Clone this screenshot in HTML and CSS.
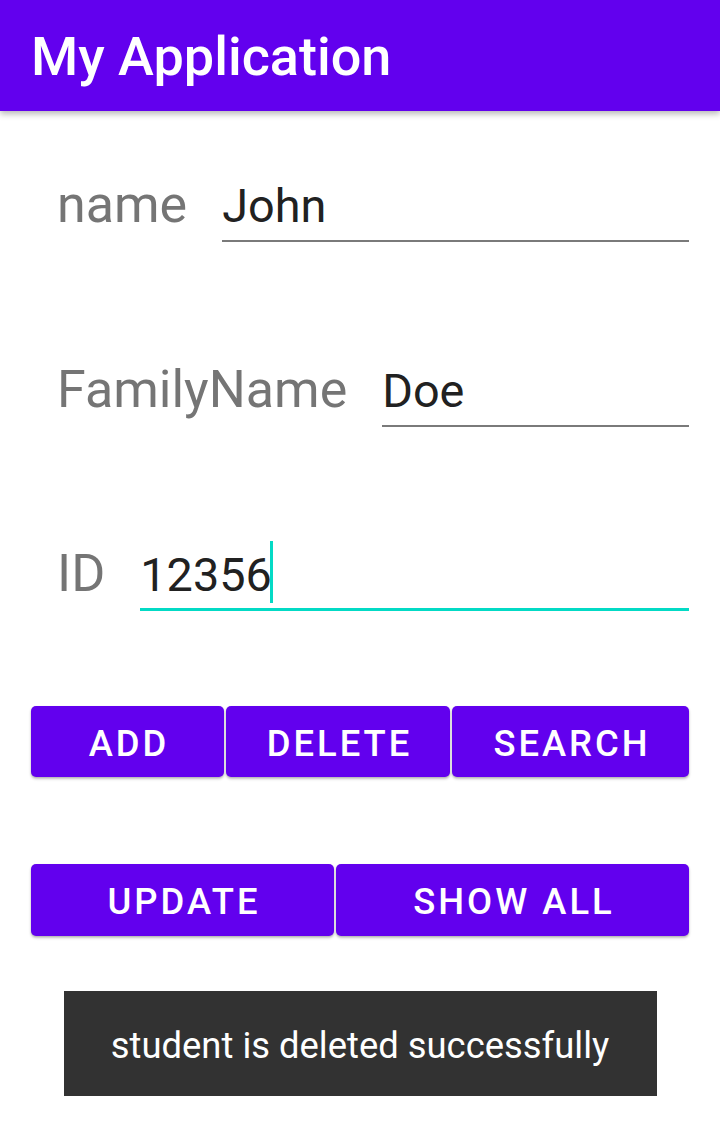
FILE: index.html
```html
<!DOCTYPE html>
<html lang="en">
<head>
<meta charset="utf-8">
<title>My Application</title>
<link rel="stylesheet" href="styles.css">
</head>
<body>
<header class="app-bar">
  <h1 class="app-title">My Application</h1>
</header>
<main class="content">
  <div class="field-row row-name">
    <span class="field-label">name</span>
    <div class="field-input">John</div>
  </div>
  <div class="field-row row-family">
    <span class="field-label">FamilyName</span>
    <div class="field-input">Doe</div>
  </div>
  <div class="field-row row-id">
    <span class="field-label">ID</span>
    <div class="field-input is-focused">12356<span class="caret"></span></div>
  </div>
  <div class="button-row row-three">
    <button class="btn" type="button">Add</button>
    <button class="btn" type="button">Delete</button>
    <button class="btn" type="button">Search</button>
  </div>
  <div class="button-row row-two">
    <button class="btn" type="button">Update</button>
    <button class="btn" type="button">Show all</button>
  </div>
  <div class="toast">student is deleted successfully</div>
</main>
</body>
</html>
```

FILE: styles.css
```css
* { box-sizing: border-box; }

html, body {
  margin: 0;
  padding: 0;
  background: #ffffff;
  font-family: Roboto, "Noto Sans", "Liberation Sans", sans-serif;
}

.app-bar {
  height: 111px;
  background: #6200ee;
  display: flex;
  align-items: center;
  padding: 3px 0 0 31px;
  box-shadow: 0 3px 6px rgba(0, 0, 0, 0.28);
  position: relative;
  z-index: 1;
}

.app-title {
  margin: 0;
  color: #ffffff;
  font-size: 54px;
  font-weight: 500;
  line-height: 62px;
}

.content {
  display: flex;
  flex-direction: column;
}

.field-row {
  display: flex;
  align-items: baseline;
  height: 68px;
  padding: 0 31px 0 57px;
}

.row-name { margin-top: 63px; }
.row-family { margin-top: 117px; }
.row-id { margin-top: 116px; }

.field-label {
  font-size: 52px;
  line-height: 61px;
  color: #757575;
  margin-right: 35px;
  white-space: nowrap;
}

.field-input {
  flex: 1;
  font-size: 46.8px;
  line-height: 55px;
  color: #212121;
  padding-bottom: 6px;
  border-bottom: 2px solid #7a7a7a;
}

.field-input.is-focused {
  border-bottom: 3px solid #03dac5;
  padding-bottom: 5px;
}

.caret {
  border-left: 3px solid #03dac5;
  padding-top: 7px;
  padding-bottom: 1px;
  margin-left: -2px;
}

.button-row {
  display: grid;
  column-gap: 2px;
  margin: 0 31px;
}

.row-three {
  grid-template-columns: 193px 224px 237px;
  margin-top: 95px;
}

.row-two {
  grid-template-columns: 303px 353px;
  margin-top: 87px;
}

.btn {
  height: 71px;
  border: 0;
  border-radius: 5px;
  background: #6200ee;
  color: #ffffff;
  font-family: Roboto, "Noto Sans", "Liberation Sans", sans-serif;
  font-size: 36.4px;
  font-weight: 500;
  letter-spacing: 3px;
  text-transform: uppercase;
  display: flex;
  align-items: center;
  justify-content: center;
  padding: 3px 0 0 3px;
  box-shadow: 0 2px 3px rgba(0, 0, 0, 0.22), 0 1px 2px rgba(0, 0, 0, 0.12);
}

.row-two .btn { height: 72px; }

.toast {
  align-self: center;
  width: 593px;
  height: 105px;
  margin-top: 55px;
  background: #323232;
  color: #ffffff;
  font-size: 36.4px;
  display: flex;
  align-items: center;
  justify-content: center;
  padding-top: 3px;
}
```
